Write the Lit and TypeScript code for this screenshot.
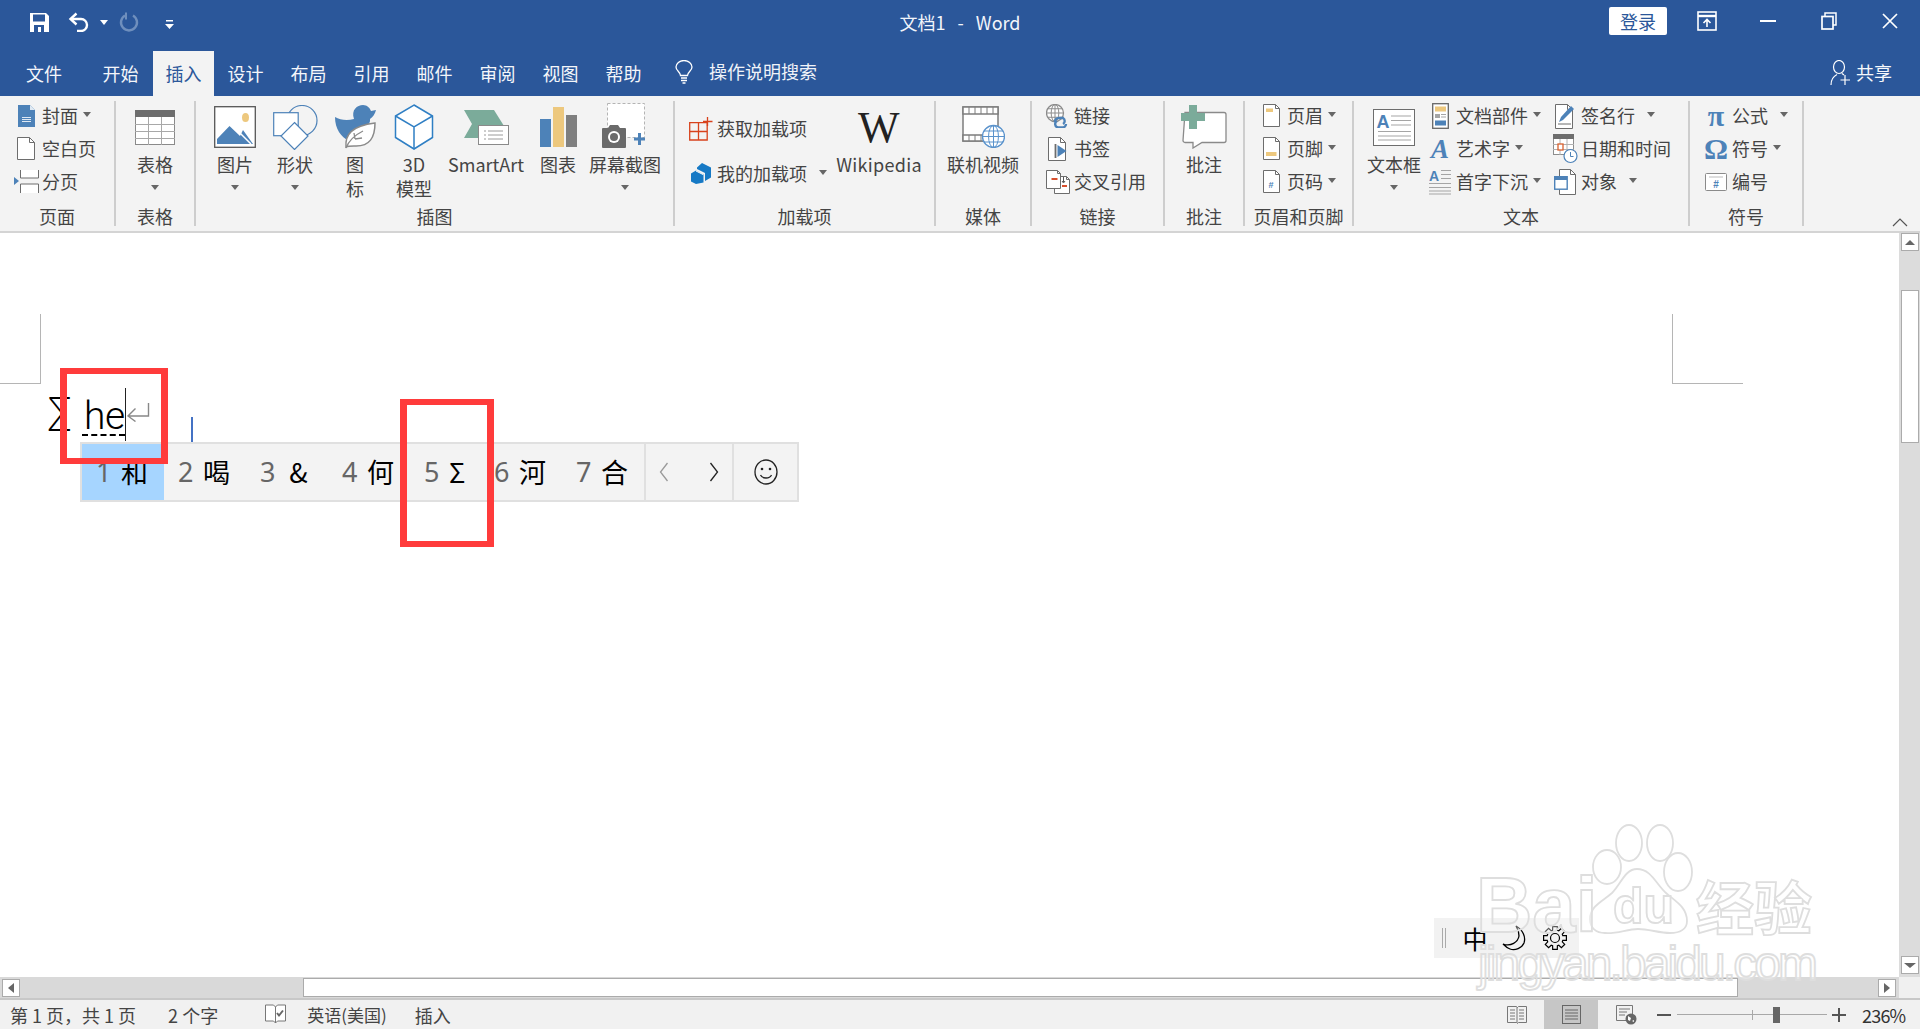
import { LitElement, html, css, svg } from "lit";
import { customElement } from "lit/decorators.js";

const BLUE = "#4d82b8";
const GOLD = "#edc87e";
const GREEN = "#7bab9a";
const GREY = "#6d6d6d";

const ico = (w: number, h: number, body: unknown) =>
  html`<svg width=${w} height=${h} viewBox="0 0 ${w} ${h}">${body}</svg>`;

const page = (x: number, y: number, w: number, h: number, f = 5) =>
  svg`<path d="M${x + .5} ${y + .5}h${w - f}l${f} ${f}v${h - f}h-${w}z" fill="#fff" stroke="#6d6d6d"/><path d="M${x + w - f + .5} ${y + .5}v${f}h${f}" fill="none" stroke="#6d6d6d"/>`;

const globe = (cx: number, cy: number, r: number, c = "#5b93cc") => svg`
  <circle cx=${cx} cy=${cy} r=${r} fill="#fff" stroke=${c} stroke-width="1.3"/>
  <ellipse cx=${cx} cy=${cy} rx=${r * .45} ry=${r} fill="none" stroke=${c}/>
  <path d="M${cx - r} ${cy}h${r * 2}M${cx - r * .85} ${cy - r * .5}h${r * 1.7}M${cx - r * .85} ${cy + r * .5}h${r * 1.7}M${cx} ${cy - r}v${r * 2}" stroke=${c} fill="none"/>`;

const gearPath = () => {
  const pts: string[] = [];
  for (let i = 0; i < 8; i++) {
    const a = (i * Math.PI) / 4;
    [[-.3, 8.2], [-.2, 11.6], [.2, 11.6], [.3, 8.2]].forEach(([d, r]) => {
      pts.push(`${(12 + r * Math.sin(a + d)).toFixed(1)} ${(12 - r * Math.cos(a + d)).toFixed(1)}`);
    });
  }
  return "M" + pts.join("L") + "z";
};

const ICONS: Record<string, () => unknown> = {
  save: () => ico(19, 19, svg`<path d="M0 0h16l3 3v16H0z" fill="#fff"/><rect x="3" y="1.5" width="12" height="7" fill="#2b579a"/><rect x="4" y="12" width="10" height="7" fill="#2b579a"/><rect x="8" y="14" width="3" height="5" fill="#fff"/>`),
  undo: () => ico(21, 20, svg`<path d="M8.5 1.5L2.5 7l6 5.5" fill="none" stroke="#fff" stroke-width="2.4"/><path d="M3 7h10a6 6 0 010 12H9" fill="none" stroke="#fff" stroke-width="2.4"/>`),
  redo: () => ico(20, 20, svg`<path d="M6 3.5a8 8 0 108 0" fill="none" stroke="#6f8fbd" stroke-width="2.4"/><path d="M6 .5v7h2V.5z" fill="#6f8fbd"/>`),
  qat: () => ico(9, 9, svg`<path d="M1 0h7v1.4H1zM0 4h9L4.5 9z" fill="#fff"/>`),
  bulb: () => ico(18, 24, svg`<path d="M5.5 15.5c0-3.500-4.500-4.500-4.500-8.500a8 6.500 0 0116 0c0 4-4.500 5-4.500 8.500z" fill="none" stroke="#fff" stroke-width="1.3"/><path d="M6 18h6M6 20.500h6M7.500 23h3" stroke="#fff" stroke-width="1.4"/>`),
  share: () => ico(20, 26, svg`<ellipse cx="9" cy="7" rx="5.5" ry="6.5" fill="none" stroke="#fff" stroke-width="1.2"/><path d="M1 25c0-6 3-9 6-10.5M12 13.5l2 1.5" fill="none" stroke="#fff" stroke-width="1.2"/><path d="M15 15v10M10.5 20h9.5" stroke="#fff" stroke-width="1.2"/>`),
  display: () => ico(20, 20, svg`<rect x="1" y="1" width="18" height="18" fill="none" stroke="#fff" stroke-width="1.6"/><path d="M1 5h18" stroke="#fff" stroke-width="2.4"/><path d="M10 16V9M6.5 12l3.5-3.5 3.5 3.5" fill="none" stroke="#fff" stroke-width="1.6"/>`),
  min: () => ico(16, 2, svg`<rect width="16" height="2" fill="#fff"/>`),
  restore: () => ico(16, 18, svg`<path d="M4 4V1h11v12h-3" fill="none" stroke="#fff" stroke-width="1.5"/><rect x="1" y="4.5" width="11" height="12.5" fill="none" stroke="#fff" stroke-width="1.7"/>`),
  close: () => ico(16, 16, svg`<path d="M1 1l14 14M15 1L1 15" stroke="#fff" stroke-width="1.7"/>`),

  cover: () => ico(17, 22, svg`<path d="M0 0h12l5 5v17H0z" fill=${BLUE}/><path d="M12 0l5 5h-5z" fill="#dfe9f3"/><path d="M4 12h9v1H4zm0 2h9v1H4zm0 2h9v1H4z" fill="#dfe9f3"/>`),
  blank: () => ico(18, 23, page(0, 0, 17, 22, 5)),
  pagebreak: () => ico(25, 23, svg`<path d="M6.5 0v8h18V0M6.5 23v-9h18v9" fill="#fff" stroke="#6d6d6d"/><path d="M0 7l5 4-5 4z" fill=${BLUE}/>`),
  table: () => ico(40, 35, svg`<rect x=".5" y=".5" width="39" height="34" fill="#fff" stroke="#8a8a8a"/><rect width="40" height="7" fill=${GREY}/><path d="M13.5 7v28M26.5 7v28M0 14.5h40M0 21.5h40M0 28.5h40" stroke="#a8a8a8"/>`),
  picture: () => ico(42, 42, svg`<rect x=".7" y=".7" width="40.6" height="40.6" fill="#fff" stroke="#555" stroke-width="1.3"/><ellipse cx="31.5" cy="11.5" rx="3.5" ry="4.5" fill=${GOLD}/><path d="M3 38V33L15.5 20 26 30l3-6 10 14z" fill=${BLUE}/><path d="M24 25l13 13" stroke="#fff" stroke-width="1.5"/>`),
  shapes: () => ico(45, 45, svg`<circle cx="29" cy="15.5" r="15" fill="none" stroke=${BLUE} stroke-width="1.2"/><rect x=".7" y="7.7" width="24.5" height="23" fill="#fff" stroke=${BLUE} stroke-width="1.2"/><path d="M21.5 17.5L35 31 21.5 44.500 8 31z" fill="#fff" stroke=${BLUE} stroke-width="1.2"/>`),
  iconset: () => ico(41, 44, svg`<path d="M0 12C5 15 12 16 19 14 16 5 22 0 28 0 32 0 35 3 36 6L41 5C40 9 38 12 35 14 36 20 28 24 22 26L14 36C6 32 0 24 0 12z" fill=${BLUE}/><path d="M11 42c-1-12 5-21 29-24 0 14-5 24-21 23-3 0-6 0-8 1z" fill="#fff" stroke="#8a8a8a" stroke-width="1.5"/><path d="M11 43c3-8 9-13 17-17M20 34l-1-6M20 34l7-1" fill="none" stroke="#8a8a8a" stroke-width="1.3"/>`),
  cube: () => ico(40, 46, svg`<path d="M20 1l18.5 11v21.5L20 45 1.5 33.5V12z" fill="#fff" stroke="#2f7fc4" stroke-width="1.5"/><path d="M1.5 12L20 23l18.5-11M20 23v22" fill="none" stroke="#2f7fc4" stroke-width="1.5"/>`),
  smartart: () => ico(45, 35, svg`<path d="M0 0h30l10 16H34v12H0l8-14z" fill=${GREEN}/><rect x="14.5" y="15.5" width="30" height="19" fill="#fff" stroke="#8a8a8a"/><path d="M20 21h2M24 21h15M20 25h2M24 25h15M20 29h2M24 29h15" stroke="#9a9a9a"/>`),
  chart: () => ico(37, 40, svg`<rect y="12" width="11" height="28" fill=${BLUE}/><rect x="13" width="11" height="40" fill=${GOLD}/><rect x="26" y="8" width="11" height="32" fill="#7f7f7f"/>`),
  screenshot: () => ico(46, 48, svg`<rect x="5.5" y=".5" width="37" height="34" fill="#fff" stroke="#b4b4b4" stroke-dasharray="3 2"/><path d="M0 26a1 1 0 011-1h5l2-3h8l2 3h5a1 1 0 011 1v18a1 1 0 01-1 1H1a1 1 0 01-1-1z" fill="#6a6a6a"/><circle cx="12" cy="34" r="6" fill="#fff"/><circle cx="12" cy="34" r="4" fill="#6a6a6a"/><path d="M32 36h11M37.5 30v12" stroke=${BLUE} stroke-width="3"/>`),
  getaddin: () => ico(24, 24, svg`<path d="M.7 5.7h17.5V23H.7zM.7 14.5h17.5M9.5 5.7V23" fill="none" stroke="#d8421c" stroke-width="1.3"/><path d="M18.5 0v9M14 4.5h9.5" stroke="#d8421c" stroke-width="1.3"/>`),
  myaddin: () => ico(21, 21, svg`<path d="M11 0l9 4.5v10L14 18v-8L6 6V4.5z" fill="#1679c5"/><path d="M5 7.5l7.5 4v8L5 21 0 18.5v-8z" fill="#1679c5"/><path d="M5 8l7 3.5" stroke="#fff"/>`),
  video: () => ico(43, 42, svg`<rect x="1" y="1" width="35" height="34" fill="#fff" stroke="#7d7d7d" stroke-width="1.5"/><rect x="1" y="1" width="35" height="7" fill="#fff" stroke="#7d7d7d" stroke-width="1.5"/><rect x="1" y="29" width="35" height="6" fill="#fff" stroke="#7d7d7d" stroke-width="1.5"/><path d="M7 1v7M13 1v7M19 1v7M25 1v7M31 1v7M7 29v6M13 29v6M19 29v6" stroke="#7d7d7d"/>${globe(31.5, 30.5, 11)}`),
  link: () => ico(24, 24, svg`${globe(9, 9, 8.5, "#8d8d8d")}<path d="M9 18a4 3.5 0 014-4h4a3.5 3.5 0 010 6M20 20a4 3.5 0 01-4 3.5h-4a3.5 3.5 0 01-1-6.5" fill="none" stroke=${BLUE} stroke-width="2.4"/>`),
  bookmark: () => ico(20, 24, svg`${page(0, 0, 17, 23, 5)}<path d="M7.5 7v14" stroke=${GREY} stroke-width="1.8"/><path d="M9.5 8l9 6-9 6z" fill=${BLUE}/>`),
  crossref: () => ico(24, 24, svg`${page(8, 6, 15, 17, 3)}${page(0, 0, 14, 18, 3)}<rect x="5.5" y="8" width="6" height="2" fill="#d8502e"/><rect x="16" y="15" width="5" height="2" fill="#d8502e"/><path d="M17.5 7v5M16 11l1.5 2 1.5-2" fill="none" stroke="#555"/>`),
  comment: () => ico(46, 44, svg`<path d="M4 8h39a2 2 0 012 2v26a2 2 0 01-2 2H21l-9 5.5V38H4a2 2 0 01-2-2z" transform="translate(0 -.5)" fill="#fff" stroke="#8a8a8a" stroke-width="1.3"/><path d="M8 0h8v8h8v8h-8v8H8v-8H0V8h8z" fill=${GREEN}/>`),
  header: () => ico(17, 23, svg`${page(0, 0, 16, 22, 4)}<rect x="3" y="4.5" width="7" height="3.5" fill=${GOLD}/>`),
  footer: () => ico(17, 23, svg`${page(0, 0, 16, 22, 4)}<rect x="3" y="15" width="10.5" height="4" fill=${GOLD}/>`),
  pagenum: () => ico(17, 23, svg`${page(0, 0, 16, 22, 4)}<text x="8" y="18" font-family="Liberation Sans" font-weight="700" font-size="9" text-anchor="middle" fill=${BLUE}>#</text>`),
  textbox: () => ico(42, 37, svg`<rect x=".5" y=".5" width="41" height="36" fill="#fff" stroke="#6d6d6d"/><text x="3.5" y="19" font-family="Liberation Sans" font-weight="700" font-size="18" fill=${BLUE}>A</text><path d="M18 7h20M18 11.5h20M18 16h20M5 22.5h33M5 27h33M5 31h33" stroke="#a5a5a5"/>`),
  quickparts: () => ico(17, 26, svg`<rect x=".7" y=".7" width="15.6" height="24.6" fill="#fff" stroke="#666" stroke-width="1.3"/><rect x="3" y="3.5" width="11" height="5" fill=${GOLD}/><rect x="3" y="11" width="5" height="4" fill="#a5a5a5"/><path d="M9 11.5h5M9 14h5" stroke="#a5a5a5"/><rect x="3" y="17.5" width="11" height="5" fill=${BLUE}/>`),
  wordart: () => html`<span class="art-a">A</span>`,
  dropcap: () => ico(22, 26, svg`<text x="0" y="12" font-family="Liberation Sans" font-weight="700" font-size="14" fill=${BLUE}>A</text><path d="M12 1.5h10M12 5.5h10M12 9.5h10M0 14.5h22M0 18.5h22M0 22h22M0 25h22" stroke="#a5a5a5"/>`),
  signature: () => ico(22, 26, svg`${page(1, 1, 17, 24, 5)}<path d="M5 19l2-5L17 3l3 3L9 17z" fill=${BLUE}/><path d="M4 21h13" stroke=${GREY}/>`),
  datetime: () => ico(25, 30, svg`<rect x=".5" y=".5" width="20" height="20" fill="#fff" stroke="#8d8d8d"/><rect width="21" height="5" fill=${GREY}/><path d="M7 5v16M14 5v16M0 10.5h21M0 15.5h21" stroke="#b0b0b0"/><rect x="5" y="10" width="5" height="6" fill="#fff" stroke="#d8602e" stroke-width="1.3"/><circle cx="17.5" cy="22" r="6.5" fill="#fff" stroke=${BLUE} stroke-width="1.2"/><path d="M17.5 18v4.5h3" fill="none" stroke=${BLUE}/>`),
  object: () => ico(22, 26, svg`${page(5, 0, 16, 25, 5)}<rect x=".7" y="7.7" width="12.5" height="12.5" fill="#fff" stroke=${BLUE} stroke-width="1.4"/><rect x="1" y="8" width="12" height="3" fill=${BLUE}/>`),
  pi: () => html`<span class="sym">π</span>`,
  omega: () => html`<span class="sym">Ω</span>`,
  number: () => ico(22, 18, svg`<rect x=".5" y=".5" width="21" height="17" rx="1" fill="#fff" stroke="#8a8a8a"/><path d="M4 4h14" stroke="#bbb"/><text x="11" y="15" font-family="Liberation Sans" font-weight="700" font-size="10" text-anchor="middle" fill=${BLUE}>#</text>`),

  proof: () => ico(21, 21, svg`<path d="M.5 1h8l2 2 2-2h8v16h-8l-2 2-2-2h-8z" fill="#fff" stroke="#777"/><path d="M10.5 3v16" stroke="#777"/><path d="M12 9l2 2.5 4-5" fill="none" stroke="#666" stroke-width="2"/>`),
  bookview: () => ico(20, 20, svg`<path d="M.5 1.5h9l1 1 1-1h8v16h-8l-1 1-1-1h-9z" fill="none" stroke="#777"/><path d="M10 2v16M3 5h5M3 8h5M3 11h5M3 14h5M12 5h5M12 8h5M12 11h5M12 14h5" stroke="#777"/>`),
  printview: () => ico(19, 19, svg`<rect x=".5" y=".5" width="18" height="18" fill="none" stroke="#666"/><path d="M3 5h13M3 8h13M3 11h13M3 14h13" stroke="#666"/>`),
  webview: () => ico(21, 20, svg`<path d="M.5.5h16v15H.5z" fill="none" stroke="#777"/><path d="M3 4h11M3 7h8M3 10h6" stroke="#777"/><circle cx="15" cy="14" r="5.5" fill="#666"/><path d="M12 11l3 2-1 3-2-1zM16 16l2-1v2z" fill="#fff"/>`),
};

const icon = (n: string) => ICONS[n]();

@customElement("app-root")
export class AppRoot extends LitElement {
  static styles = css`
    :host {
      display: block;
      width: 1920px;
      height: 1029px;
      overflow: hidden;
      position: relative;
      font-family: "Noto Sans CJK SC", "Liberation Sans", sans-serif;
      font-size: 18px;
      color: #444;
      background: #fff;
    }
    .app { display: flex; flex-direction: column; height: 1029px; }
    svg { display: block; flex: none; }

    /* blue title area */
    .top { background: #2b579a; color: #fff; height: 96px; flex: none; }
    .titlebar { display: grid; grid-template-columns: 1fr auto 1fr; height: 51px; align-items: center; padding-bottom: 5px; box-sizing: border-box; }
    .qat { display: flex; align-items: center; padding-left: 30px; margin-top: -2px; }
    .qat .undo { margin-left: 19px; }
    .qat .wcaret { margin-left: 11px; margin-right: 11px; border-top-color: #fff; }
    .qat .more { margin-left: 26px; margin-top: 4px; }
    .doc-title { line-height: 24px; white-space: pre; color: #f2f5fa; word-spacing: 2px; margin-top: -2px; }
    .winbtns { display: flex; justify-content: flex-end; align-items: center; height: 28px; margin-top: -4px; }
    .login { background: #fff; color: #2b579a; width: 58px; height: 28px; line-height: 28px; text-align: center; border-radius: 2px; margin-right: 9px; }
    .win { width: 61px; display: flex; justify-content: center; }

    .tabs { display: flex; height: 45px; }
    .tab { width: 63px; text-align: center; line-height: 44px; color: #f4f6fa; }
    .tab.first { width: 88px; }
    .tab.home { width: 65px; }
    .tab.on { width: 61px; background: #f3f3f3; color: #2b579a; }
    .search { display: flex; align-items: center; margin-left: 20px; height: 44px; color: #f0f3f8; }
    .search svg { margin-right: 16px; margin-top: -3px; }
    .search span { margin-top: -4px; }
    .share { margin-left: auto; display: flex; align-items: center; padding-right: 28px; gap: 6px; height: 44px; color: #f6f8fb; }
    .share span { margin-top: -2px; }

    /* ribbon */
    .ribbon { flex: none; height: 137px; box-sizing: border-box; padding: 5px 0 5px; background: #f3f3f3; border-bottom: 2px solid #d4d4d4; display: flex; position: relative; }
    .group { height: 125px; display: flex; flex-direction: column; border-right: 2px solid #cdcdcd; box-sizing: border-box; flex: none; }
    .body { height: 101px; display: flex; align-items: flex-start; }
    .glabel { height: 24px; line-height: 29px; text-align: center; white-space: nowrap; color: #444; }
    .w-page { width: 116px; } .w-table { width: 80px; } .w-illus { width: 479px; } .w-addin { width: 261px; }
    .w-media { width: 96px; } .w-link { width: 133px; } .w-comment { width: 80px; } .w-hf { width: 109px; }
    .w-text { width: 336px; } .w-sym { width: 114px; }
    .p14 { padding-left: 14px; }
    .p9 { padding-left: 9px; }
    .p12 { padding-left: 12px; }

    .col { display: flex; flex-direction: column; margin-top: -3px; }
    .col.c1 { width: 125px; }
    .row { display: flex; align-items: center; height: 33px; white-space: nowrap; }
    .tall { margin-top: 4px; width: 145px; }
    .tall .row { height: 45px; }
    .slot { width: 24px; margin-right: 4px; margin-top: 2px; display: flex; justify-content: center; align-items: center; }
    .caret { width: 0; height: 0; border: 4px solid transparent; border-top: 5px solid #666; border-bottom: 0; margin-left: 5px; flex: none; }
    .caret.far { margin-left: 12px; }

    .large { display: flex; flex-direction: column; align-items: center; flex: none; width: 100%; text-align: center; line-height: 24px; white-space: nowrap; }
    .large .pic { height: 50px; display: flex; align-items: center; justify-content: center; margin-top: 1px; }
    .large .caret { margin: 9px 0 0; }
    .w60 { width: 60px; } .w58 { width: 58px; } .w86 { width: 86px; } .w76 { width: 76px; } .w90 { width: 90px; letter-spacing: .3px; } .w56 { width: 56px; }
    .mr6 { margin-right: 6px; }
    .wlogo { font-family: "Liberation Serif", serif; font-size: 44px; line-height: 51px; color: #222; font-weight: 400; }
    .art-a { font-family: "Liberation Serif", serif; font-style: italic; font-weight: 700; font-size: 27px; line-height: 26px; color: #4d82b8; }
    .sym { font-family: "Liberation Serif", serif; font-weight: 700; font-size: 30px; line-height: 26px; color: #4d82b8; }
    .collapse { position: absolute; right: 12px; bottom: 4px; }

    /* document */
    .main { flex: 1; display: grid; grid-template-columns: 1fr 21px; grid-template-rows: 1fr 21px; min-height: 0; }
    .canvas { position: relative; background: #fff; padding-top: 81px; overflow: hidden; }
    .marks { display: flex; justify-content: space-between; height: 70px; box-sizing: border-box; }
    .mark-l { width: 40px; border-right: 1px solid #b5b5b5; border-bottom: 1px solid #b5b5b5; }
    .mark-r { width: 70px; margin-right: 156px; border-left: 1px solid #b5b5b5; border-bottom: 1px solid #b5b5b5; }
    .line { display: flex; align-items: flex-end; height: 58px; padding-left: 46px; color: #000; }
    .sigma { font-family: "Inter", sans-serif; font-size: 46px; font-weight: 200; line-height: 50px; width: 25px; margin-bottom: 3px; transform: scaleX(.85); transform-origin: left center; }
    .he { font-family: "Roboto", sans-serif; font-weight: 300; font-size: 39px; line-height: 38px; margin-left: 11px; padding-left: 2px; margin-bottom: 6px; height: 37px; border-bottom: 2px dashed #000; width: 41px; letter-spacing: -.5px; }
    .cursor { width: 1px; height: 53px; background: #222; margin-bottom: 1px; flex: none; }
    .ret { margin-bottom: 20px; }
    .ret-wrap { width: 65px; display: flex; align-items: flex-end; height: 100%; }
    .blue-caret { width: 2px; height: 25px; background: #4472c4; }

    .cands { position: absolute; left: 80px; top: 209px; width: 719px; height: 60px; box-sizing: border-box; border: 2px solid #e0e0e0; background: #f3f3f3; display: flex; align-items: center; color: #000; font-size: 27px; }
    .cand { width: 82px; height: 100%; display: flex; align-items: center; padding-left: 14px; padding-bottom: 2px; box-sizing: border-box; flex: none; }
    .cand.on { background: #a6d5ff; }
    .cand.narrow { width: 70px; }
    .cand.narrow i { text-align: left; }
    .cand b { font-weight: 400; color: #666; width: 16px; margin-right: 9px; font-family: "Noto Sans", sans-serif; }
    .cand i { font-style: normal; width: 27px; text-align: center; }
    .nav { width: 90px; height: 100%; border-left: 2px solid #e0e0e0; border-right: 2px solid #e0e0e0; box-sizing: border-box; display: flex; align-items: center; justify-content: center; gap: 40px; }
    .smile { flex: 1; display: flex; justify-content: center; }

    .box { position: absolute; border-style: solid; border-color: #ff3b3b; border-width: 6px 7px; box-sizing: border-box; }
    .box1 { left: 60px; top: 135px; width: 108px; height: 96px; }
    .box2 { left: 400px; top: 166px; width: 94px; height: 148px; }

    .vscroll { background: #dcdcdc; display: flex; flex-direction: column; align-items: center; }
    .sbtn { background: #fff; border: 1px solid #ababab; box-sizing: border-box; width: 18px; height: 18px; display: flex; align-items: center; justify-content: center; flex: none; }
    .vthumb { width: 18px; height: 153px; background: #fff; border: 1px solid #ababab; box-sizing: border-box; margin-top: 39px; }
    .vscroll .down { margin-top: auto; margin-bottom: 3px; }
    .hscroll { background: #d9d9d9; display: flex; align-items: center; padding-left: 2px; }
    .hthumb { width: 1435px; height: 19px; background: #fff; border: 1px solid #ababab; box-sizing: border-box; margin-left: 283px; }
    .hscroll .right { margin-left: 140px; }
    .corner { background: #f0f0f0; }
    .tri-l { border: 5px solid transparent; border-left: 0; border-right: 6px solid #666; }
    .tri-r { border: 5px solid transparent; border-right: 0; border-left: 6px solid #666; }
    .tri-u { border: 5px solid transparent; border-top: 0; border-bottom: 5px solid #666; }
    .tri-d { border: 6px solid transparent; border-bottom: 0; border-top: 5px solid #666; }

    .ime { position: absolute; left: 1434px; top: 685px; width: 145px; height: 40px; background: rgba(232, 232, 232, .55); display: flex; align-items: center; color: #000; }
    .grip { width: 4px; height: 20px; margin-left: 8px; border-left: 1px solid #aaa; border-right: 1px solid #aaa; box-sizing: border-box; }
    .ime .zh { font-size: 25px; margin-left: 16px; width: 26px; text-align: center; line-height: 30px; }
    .ime .moon { margin-left: 14px; }
    .ime .gear { margin-left: 16px; }

    /* status bar */
    .status { flex: none; height: 31px; background: #f1f1f1; border-top: 2px solid #c8c8c8; box-sizing: border-box; display: flex; align-items: center; color: #444; white-space: pre; }
    .s1 { margin-left: 10px; }
    .s2 { margin-left: 32px; }
    .s3 { margin-left: 47px; }
    .s4 { margin-left: 21px; font-size: 17px; }
    .s5 { margin-left: 28px; }
    .views { margin-left: auto; display: flex; align-items: center; height: 100%; }
    .views .b { margin-right: 17px; }
    .views .active { width: 54px; height: 100%; background: #c6c6c6; display: flex; align-items: center; justify-content: center; }
    .views .w { margin-left: 18px; }
    .zoom { display: flex; align-items: center; margin-left: 20px; }
    .pm { width: 14px; height: 2px; background: #555; position: relative; }
    .pm.plus::after { content: ""; position: absolute; left: 6px; top: -6px; width: 2px; height: 14px; background: #555; }
    .slider { width: 150px; height: 1px; background: #a8a8a8; margin: 0 5px 0 6px; display: flex; align-items: center; }
    .tick { width: 1px; height: 10px; background: #a8a8a8; margin-left: 75px; flex: none; }
    .thumb { width: 7px; height: 16px; background: #666; margin-left: 20px; flex: none; }
    .pct { width: 43px; margin-left: 16px; margin-right: 15px; color: #333; letter-spacing: -.8px; }

    .wm { position: absolute; left: 1470px; top: 820px; pointer-events: none; }
  `;

  private small(ic: string, text: string, caret = "") {
    return html`<div class="row">
      <span class="slot">${icon(ic)}</span><span>${text}</span>
      ${caret ? html`<span class="caret ${caret === "far" ? "far" : ""}"></span>` : ""}
    </div>`;
  }

  private large(ic: unknown, lines: string[], cls: string, caret = true) {
    return html`<div class="large ${cls}">
      <div class="pic">${ic}</div>
      ${lines.map((l) => html`<div>${l}</div>`)}
      ${caret ? html`<span class="caret"></span>` : ""}
    </div>`;
  }

  private group(label: string, cls: string, bodyCls: string, body: unknown) {
    return html`<div class="group ${cls}">
      <div class="body ${bodyCls}">${body}</div>
      <div class="glabel">${label}</div>
    </div>`;
  }

  private renderRibbon() {
    return html`<div class="ribbon">
      ${this.group("页面", "w-page", "p14", html`<div class="col">
        ${this.small("cover", "封面", "near")}
        ${this.small("blank", "空白页")}
        ${this.small("pagebreak", "分页")}
      </div>`)}
      ${this.group("表格", "w-table", "", this.large(icon("table"), ["表格"], ""))}
      ${this.group("插图", "w-illus", "p9", html`
        ${this.large(icon("picture"), ["图片"], "w60")}
        ${this.large(icon("shapes"), ["形状"], "w60")}
        ${this.large(icon("iconset"), ["图", "标"], "w60", false)}
        ${this.large(icon("cube"), ["3D", "模型"], "w58", false)}
        ${this.large(icon("smartart"), ["SmartArt"], "w86", false)}
        ${this.large(icon("chart"), ["图表"], "w58", false)}
        ${this.large(icon("screenshot"), ["屏幕截图"], "w76")}
      `)}
      ${this.group("加载项", "w-addin", "p14", html`
        <div class="col tall">
          ${this.small("getaddin", "获取加载项")}
          ${this.small("myaddin", "我的加载项", "far")}
        </div>
        ${this.large(html`<span class="wlogo">W</span>`, ["Wikipedia"], "w90", false)}
      `)}
      ${this.group("媒体", "w-media", "", this.large(icon("video"), ["联机视频"], "", false))}
      ${this.group("链接", "w-link", "p14", html`<div class="col">
        ${this.small("link", "链接")}
        ${this.small("bookmark", "书签")}
        ${this.small("crossref", "交叉引用")}
      </div>`)}
      ${this.group("批注", "w-comment", "", this.large(icon("comment"), ["批注"], "", false))}
      ${this.group("页眉和页脚", "w-hf", "p14", html`<div class="col">
        ${this.small("header", "页眉", "near")}
        ${this.small("footer", "页脚", "near")}
        ${this.small("pagenum", "页码", "near")}
      </div>`)}
      ${this.group("文本", "w-text", "p12", html`
        ${this.large(icon("textbox"), ["文本框"], "w56 mr6")}
        <div class="col c1">
          ${this.small("quickparts", "文档部件", "near")}
          ${this.small("wordart", "艺术字", "near")}
          ${this.small("dropcap", "首字下沉", "near")}
        </div>
        <div class="col">
          ${this.small("signature", "签名行", "far")}
          ${this.small("datetime", "日期和时间")}
          ${this.small("object", "对象", "far")}
        </div>
      `)}
      ${this.group("符号", "w-sym", "p14", html`<div class="col">
        ${this.small("pi", "公式", "far")}
        ${this.small("omega", "符号", "near")}
        ${this.small("number", "编号")}
      </div>`)}
      <div class="collapse">${ico(16, 9, svg`<path d="M1 8l7-7 7 7" fill="none" stroke="#555" stroke-width="1.2"/>`)}</div>
    </div>`;
  }

  private renderCands() {
    const items: [string, string, string][] = [
      ["1", "和", "on"], ["2", "喝", ""], ["3", "&", ""], ["4", "何", ""],
      ["5", "Σ", "narrow"], ["6", "河", ""], ["7", "合", ""],
    ];
    return html`<div class="cands">
      ${items.map(([n, c, k]) => html`<div class="cand ${k}"><b>${n}</b><i>${c}</i></div>`)}
      <div class="nav">
        ${ico(10, 20, svg`<path d="M8.5 1L1.5 10l7 9" fill="none" stroke="#999" stroke-width="1.3"/>`)}
        ${ico(10, 20, svg`<path d="M1.5 1l7 9-7 9" fill="none" stroke="#222" stroke-width="1.3"/>`)}
      </div>
      <div class="smile">${ico(24, 26, svg`<ellipse cx="12" cy="13" rx="11" ry="12" fill="none" stroke="#222" stroke-width="1.3"/><circle cx="8" cy="10" r="1.3" fill="#222"/><circle cx="16" cy="10" r="1.3" fill="#222"/><path d="M6.5 16c2 4 9 4 11 0" fill="none" stroke="#222" stroke-width="1.3"/>`)}</div>
    </div>`;
  }

  private renderWatermark() {
    const st = "fill:rgba(255,255,255,.35);stroke:#dedede;stroke-width:1.8";
    return html`<svg class="wm" width="360" height="175" viewBox="0 0 360 175">
      <g style=${st}>
        <ellipse cx="137" cy="47" rx="14" ry="17"/>
        <ellipse cx="159" cy="23" rx="13" ry="18"/>
        <ellipse cx="190" cy="23" rx="13" ry="18"/>
        <ellipse cx="208" cy="52" rx="14" ry="19"/>
        <path d="M167 49c14 0 19 15 29 24 9 8 21 14 21 28 0 8-7 12-17 12-11 0-21-4-32-4-11 0-21 5-33 4-9 0-15-5-15-14 0-13 13-18 22-26 9-9 13-24 25-24z"/>
        <text x="6" y="112" font-family="Liberation Sans" font-weight="700" font-size="78">Bai</text>
        <text x="143" y="103" font-family="Liberation Sans" font-weight="700" font-size="50">du</text>
        <text x="226" y="110" font-family="Noto Sans CJK SC" font-weight="700" font-size="58">经验</text>
        <text x="8" y="160" font-family="Liberation Sans" font-size="48" textLength="340">jingyan.baidu.com</text>
      </g>
    </svg>`;
  }

  render() {
    return html`<div class="app">
      <div class="top">
        <div class="titlebar">
          <div class="qat">
            ${icon("save")}<span class="undo">${icon("undo")}</span>
            <span class="caret wcaret"></span>${icon("redo")}
            <span class="more">${icon("qat")}</span>
          </div>
          <div class="doc-title">文档1  -  Word</div>
          <div class="winbtns">
            <div class="login">登录</div>
            <div class="win">${icon("display")}</div>
            <div class="win">${icon("min")}</div>
            <div class="win">${icon("restore")}</div>
            <div class="win">${icon("close")}</div>
          </div>
        </div>
        <div class="tabs">
          <div class="tab first">文件</div>
          <div class="tab home">开始</div>
          <div class="tab on">插入</div>
          ${["设计", "布局", "引用", "邮件", "审阅", "视图", "帮助"].map((t) => html`<div class="tab">${t}</div>`)}
          <div class="search">${icon("bulb")}<span>操作说明搜索</span></div>
          <div class="share">${icon("share")}<span>共享</span></div>
        </div>
      </div>
      ${this.renderRibbon()}
      <div class="main">
        <div class="canvas">
          <div class="marks"><div class="mark-l"></div><div class="mark-r"></div></div>
          <div class="line">
            <span class="sigma">Σ</span>
            <span class="he">he</span>
            <span class="cursor"></span>
            <span class="ret-wrap">
              <span class="ret">${ico(24, 20, svg`<path d="M22.5 1v13H2M9.5 6.5L2 14l7.5 5.5" fill="none" stroke="#888" stroke-width="1.4"/>`)}</span>
            </span>
            <span class="blue-caret"></span>
          </div>
          ${this.renderCands()}
          <div class="box box1"></div>
          <div class="box box2"></div>
          <div class="ime">
            <span class="grip"></span>
            <span class="zh">中</span>
            <span class="moon">${ico(25, 26, svg`<path d="M14 1c7 4 10 11 8 17-2 5-9 8-14 6-3-1-5-3-7-5 8 3 15-2 16-8 0-4-1-7-3-10z" fill="none" stroke="#000" stroke-width="1.3"/>`)}</span>
            <span class="gear">${ico(24, 24, svg`<path d=${gearPath()} fill="none" stroke="#000" stroke-width="1.2"/><circle cx="12" cy="12" r="4.5" fill="none" stroke="#000" stroke-width="1.2"/>`)}</span>
          </div>
        </div>
        <div class="vscroll">
          <div class="sbtn"><span class="tri-u"></span></div>
          <div class="vthumb"></div>
          <div class="sbtn down"><span class="tri-d"></span></div>
        </div>
        <div class="hscroll">
          <div class="sbtn"><span class="tri-l"></span></div>
          <div class="hthumb"></div>
          <div class="sbtn right"><span class="tri-r"></span></div>
        </div>
        <div class="corner"></div>
      </div>
      <div class="status">
        <span class="s1">第 1 页，共 1 页</span>
        <span class="s2">2 个字</span>
        <span class="s3">${icon("proof")}</span>
        <span class="s4">英语(美国)</span>
        <span class="s5">插入</span>
        <div class="views">
          <span class="b">${icon("bookview")}</span>
          <span class="active">${icon("printview")}</span>
          <span class="w">${icon("webview")}</span>
          <div class="zoom">
            <span class="pm"></span>
            <div class="slider"><span class="tick"></span><span class="thumb"></span></div>
            <span class="pm plus"></span>
            <span class="pct">236%</span>
          </div>
        </div>
      </div>
      ${this.renderWatermark()}
    </div>`;
  }
}
